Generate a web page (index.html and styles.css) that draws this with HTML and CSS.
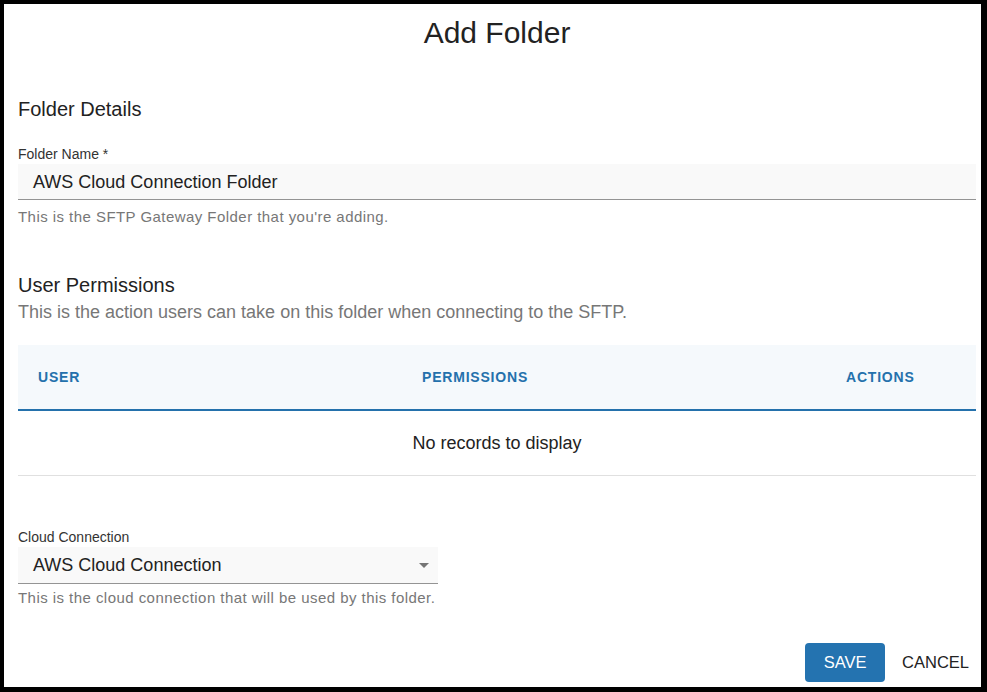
FILE: index.html
```html
<!DOCTYPE html>
<html>
<head>
    <meta charset="utf-8">
    <meta name="viewport" content="width=device-width, initial-scale=1">
    <title>Add Folder</title>
    <link rel="stylesheet" href="styles.css">
</head>
<body>
    <div class="dialog">
        <h1 class="dialog-title">Add Folder</h1>

        <h2 class="section-title">Folder Details</h2>
        <div class="field">
            <label class="field-label">Folder Name *</label>
            <div class="field-input">AWS Cloud Connection Folder</div>
            <p class="helper">This is the SFTP Gateway Folder that you're adding.</p>
        </div>

        <h2 class="section-title section-perms">User Permissions</h2>
        <p class="section-desc">This is the action users can take on this folder when connecting to the SFTP.</p>

        <div class="table">
            <div class="table-head">
                <div class="th">User</div>
                <div class="th">Permissions</div>
                <div class="th">Actions</div>
            </div>
            <div class="table-empty">No records to display</div>
        </div>

        <div class="field field-cloud">
            <label class="field-label">Cloud Connection</label>
            <div class="field-input field-select">
                <span>AWS Cloud Connection</span>
                <span class="select-arrow"></span>
            </div>
            <p class="helper helper-tight">This is the cloud connection that will be used by this folder.</p>
        </div>

        <div class="dialog-actions">
            <button class="btn btn-primary">SAVE</button>
            <button class="btn btn-text">CANCEL</button>
        </div>
    </div>
</body>
</html>
```

FILE: styles.css
```css
html, body {
    margin: 0;
    padding: 0;
    height: 692px;
    background: #000;
    overflow: hidden;
}

body {
    font-family: "Liberation Sans", Arial, sans-serif;
    color: #222;
}

.dialog {
    box-sizing: border-box;
    height: 683px;
    margin: 4px 6px 5px 4px;
    padding: 10px 5px 0 14px;
    background: #fff;
}

.dialog-title {
    margin: 0;
    font-size: 30px;
    line-height: 37px;
    font-weight: normal;
    text-align: center;
    color: #222;
}

.section-title {
    margin: 46px 0 0 0;
    font-size: 20px;
    line-height: 24px;
    font-weight: normal;
    color: #222;
}

.section-perms {
    margin-top: 47px;
}

.field-label {
    display: block;
    margin-top: 25px;
    font-size: 14px;
    line-height: 16px;
    color: #333;
}

.field-input {
    box-sizing: border-box;
    margin-top: 2px;
    height: 36px;
    padding: 1px 15px 0 15px;
    background: #f9f9f9;
    border-bottom: 1px solid #949494;
    font-size: 18px;
    line-height: 34px;
    color: #222;
}

.helper {
    margin: 8px 0 0 0;
    font-size: 15px;
    line-height: 18px;
    letter-spacing: 0.45px;
    color: #777;
}

.helper-tight {
    margin-top: 5px;
}

.section-desc {
    margin: 4px 0 0 0;
    font-size: 18px;
    line-height: 22px;
    color: #777;
}

.table {
    margin-top: 22px;
}

.table-head {
    display: grid;
    grid-template-columns: 384px 424px 150px;
    height: 64px;
    align-items: center;
    background: #f5f9fc;
    border-bottom: 2px solid #2471ac;
}

.th {
    padding-left: 20px;
    font-size: 14px;
    font-weight: bold;
    letter-spacing: 0.8px;
    text-transform: uppercase;
    color: #2471ac;
}

.table-empty {
    height: 64px;
    line-height: 64px;
    text-align: center;
    font-size: 18px;
    color: #222;
    border-bottom: 1px solid #e0e0e0;
}

.field-cloud .field-label {
    margin-top: 53px;
}

.field-select {
    display: flex;
    align-items: center;
    width: 420px;
    height: 37px;
    line-height: 35px;
    padding-right: 9px;
}

.select-arrow {
    margin-left: auto;
    width: 0;
    height: 0;
    border-left: 5.5px solid transparent;
    border-right: 5.5px solid transparent;
    border-top: 5px solid #757575;
}

.dialog-actions {
    display: flex;
    justify-content: flex-end;
    gap: 10px;
    margin-top: 36px;
}

.btn {
    height: 39px;
    border: none;
    border-radius: 4px;
    font-family: "Liberation Sans", Arial, sans-serif;
    font-size: 16.5px;
    cursor: pointer;
}

.btn-primary {
    width: 80px;
    background: #2473b0;
    color: #fff;
}

.btn-text {
    padding: 0 7px;
    background: transparent;
    color: #222;
}
```
